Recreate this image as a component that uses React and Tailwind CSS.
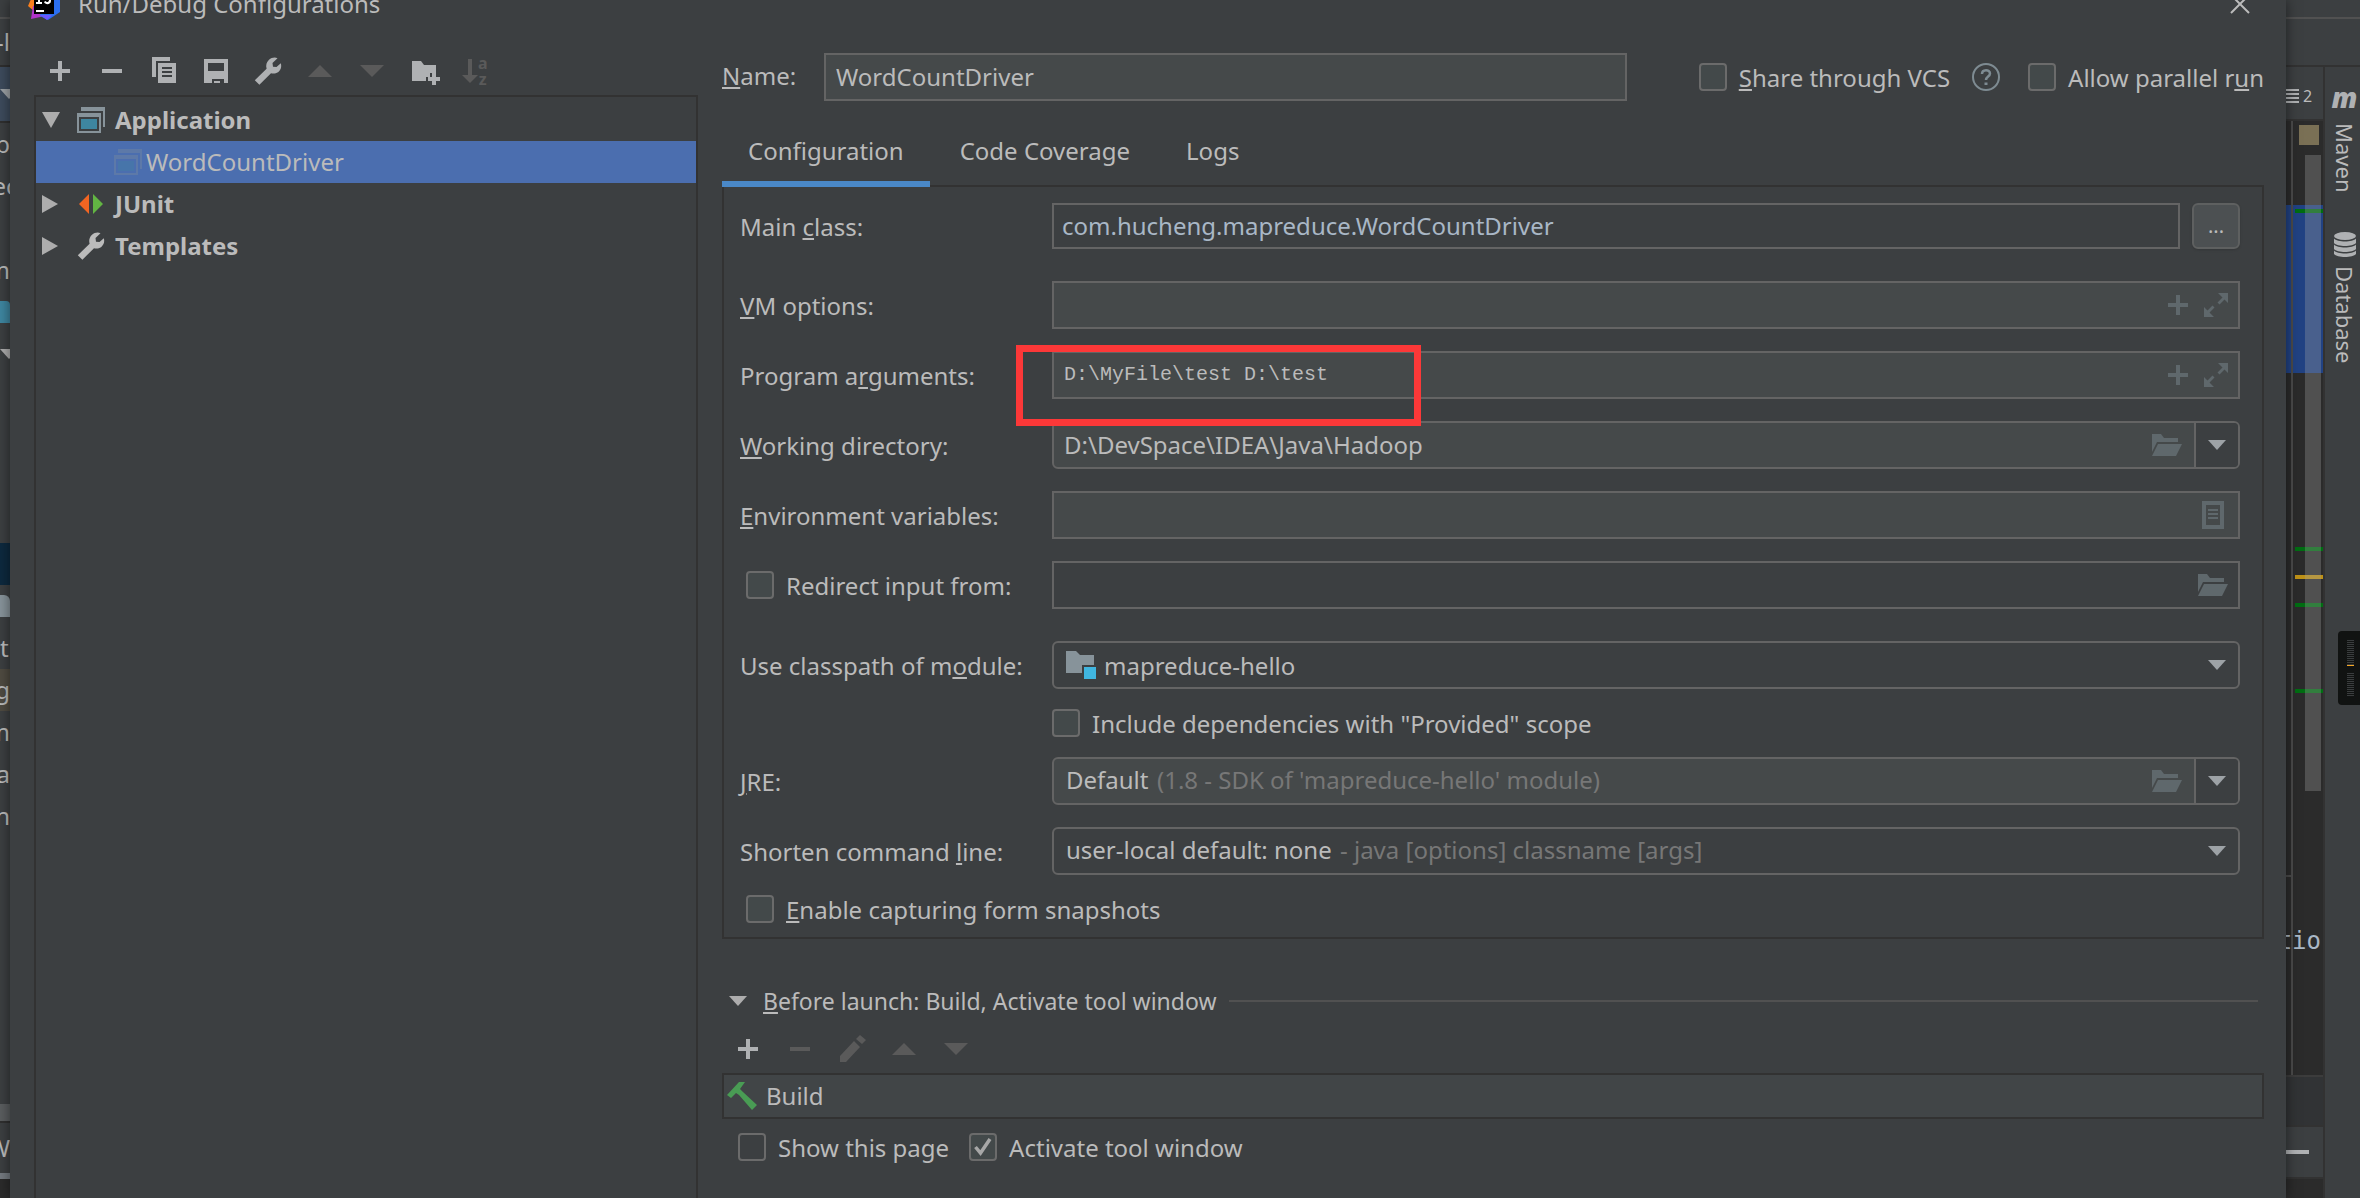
import React from "react";

/* ---------- icons ---------- */

const Svg = ({ w, h, className = "", children }) => (
  <svg width={w} height={h} viewBox={`0 0 ${w} ${h}`} fill="currentColor" className={`shrink-0 ${className}`} aria-hidden="true">
    {children}
  </svg>
);

const PlusIcon = () => (
  <Svg w={32} h={32}>
    <path d="M14 6h4v8h8v4h-8v8h-4v-8H6v-4h8z" />
  </Svg>
);
const MinusIcon = () => (
  <Svg w={32} h={32}>
    <path d="M6 14h20v4H6z" />
  </Svg>
);
const CopyIcon = () => (
  <Svg w={32} h={32}>
    <path d="M4 2h18v4H8v16H4z" />
    <path fillRule="evenodd" d="M10 8h18v20H10zM14 12v2h10v-2zM14 16v2h10v-2zM14 20v2h10v-2z" />
  </Svg>
);
const SaveIcon = () => (
  <Svg w={32} h={32}>
    <path fillRule="evenodd" d="M4 4h24v24h-4v-4H12v4H4zM8 8v8h16V8z" />
    <path d="M14 26h6v2h-6z" />
  </Svg>
);
const WrenchIcon = () => (
  <Svg w={32} h={32}>
    <path d="M25.500 3.200L20.500 8L21 11.800L24.500 12L28.800 8.200C29.900 11.800 28.700 15.300 26 17.200C23.900 18.600 21.300 18.900 19 18.200L7.400 29.700L2.800 25.200L14.600 13.800C13.600 10.300 14.500 7 17 4.700C19.500 2.500 23 2.100 25.500 3.200Z" />
  </Svg>
);
const UpIcon = () => (
  <Svg w={32} h={32}>
    <path d="M4 22L16 10l12 12z" />
  </Svg>
);
const DownIcon = () => (
  <Svg w={32} h={32}>
    <path d="M4 10h24L16 22z" />
  </Svg>
);
const NewFolderIcon = () => (
  <Svg w={32} h={32}>
    <path d="M4 6h9l3 4h12v8h-6v4h-4v4H4z" />
    <path d="M24 18h4v4h4v4h-4v4h-4v-4h-4v-4h4z" />
  </Svg>
);
const SortIcon = () => (
  <span className="flex h-8 items-center">
    <Svg w={18} h={32}>
      <path d="M8 4h4v16h6L10 28l-8-8h6z" />
    </Svg>
    <span className="flex flex-col text-base font-bold leading-4">
      <span>a</span>
      <span>z</span>
    </span>
  </span>
);
const PencilIcon = () => (
  <Svg w={32} h={32}>
    <path d="M4 23L18 8l6 6L10 29H4zM20 6l4-4 6 5-4 4z" />
  </Svg>
);
const ApplicationIcon = ({ className }) => (
  <Svg w={32} h={32} className={className}>
    <path d="M6 3h24v20h-2V7H6z" fill="#87939a" />
    <path fillRule="evenodd" d="M2 9h24v20H2zM4 13v14h20V13z" fill="#87939a" />
    <path d="M6 15h16v10H6z" fill="#3e86a0" />
  </Svg>
);
const JUnitIcon = () => (
  <Svg w={32} h={32}>
    <path d="M14 6v20L4 16z" fill="#f26522" />
    <path d="M18 6v20l10-10z" fill="#62b543" />
  </Svg>
);
const TreeArrow = ({ open }) => (
  <Svg w={20} h={20} className="text-[#adadad]">
    {open ? <path d="M1 2h18l-9 16z" /> : <path d="M1 1l16 9-16 9z" />}
  </Svg>
);
const Caret = ({ className = "text-[#9da2a6]" }) => (
  <Svg w={18} h={10} className={className}>
    <path d="M0 0h18l-9 10z" />
  </Svg>
);
const FolderOpenIcon = () => (
  <Svg w={30} h={22}>
    <path d="M0 0h9l3 4h14v4H5L0 18z" />
    <path d="M6 10h24l-6 12H0z" />
  </Svg>
);
const ExpandIcon = () => (
  <Svg w={24} h={24}>
    <path d="M14 0h10v10l-3.500-3.500-5 5-2-2 5-5zM0 14l3.500 3.500 5-5 2 2-5 5L10 24H0z" />
  </Svg>
);
const FieldPlusIcon = () => (
  <Svg w={20} h={20}>
    <path d="M8 0h4v8h8v4h-8v8H8v-8H0V8h8z" />
  </Svg>
);
const ListDocIcon = () => (
  <Svg w={22} h={28}>
    <path fillRule="evenodd" d="M0 0h22v28H0zM4 4v20h14V4z" />
    <path d="M6 8h10v2H6zM6 12h10v2H6zM6 16h10v2H6z" />
  </Svg>
);
const ModuleIcon = () => (
  <Svg w={30} h={28}>
    <path d="M0 0h10l4 4h14v10H16v8H0z" fill="#87939a" />
    <path d="M18 16h12v12H18z" fill="#40b6e0" />
  </Svg>
);
const HammerIcon = () => (
  <Svg w={32} h={32}>
    <path d="M1 15L13 2h6l-5 7 3 3 14 13-5 5L13 15l-3-2-5 5z" fill="#499c54" />
  </Svg>
);
const HelpIcon = () => (
  <svg width="28" height="28" viewBox="0 0 28 28" fill="none" stroke="#7e8b92" strokeWidth="2" aria-hidden="true">
    <circle cx="14" cy="14" r="13" />
    <path d="M10 11c0-5 8-5 8-0.500 0 3-4 3-4 6.500" strokeWidth="2.500" />
    <path d="M14 19.500v2.500" strokeWidth="3" />
  </svg>
);
const IdeaLogo = () => (
  <svg width="32" height="32" viewBox="0 0 32 32" className="shrink-0" aria-hidden="true">
    <path d="M0 18l6-14 10 14-4 10z" fill="#fc801d" />
    <path d="M5 18l-2 13 14-3-2-14z" fill="#b033c8" />
    <path d="M18 0h14v24l-12 8-8-4z" fill="#2b6ff0" />
    <path d="M12 27h12l-5 5z" fill="#6b57ff" />
    <path d="M6 4h20v22H6z" fill="#000" />
    <path d="M8 7h6v2h-2v5h2v2H8v-2h2V9H8zM16 7h7v6c0 4-6 4-7 1l1.500-1c1 2 3.500 1 3.500-1V9h-5zM8 22h8v2H8z" fill="#fff" />
  </svg>
);
const DatabaseIcon = () => (
  <svg width="24" height="26" viewBox="0 0 24 26" fill="#afb1b3" className="shrink-0" aria-hidden="true">
    <ellipse cx="12" cy="4" rx="11" ry="4" />
    <path d="M1 6.500c3 4 19 4 22 0v4.500c-3 4-19 4-22 0zM1 12.500c3 4 19 4 22 0V17c-3 4-19 4-22 0zM1 18.500c3 4 19 4 22 0V22c-3 4-19 4-22 0z" />
  </svg>
);

/* ---------- small parts ---------- */

const M = ({ children }) => <span className="underline decoration-2 underline-offset-2">{children}</span>;

function Check({ id, checked, plain }) {
  return (
    <span className="relative flex size-7 shrink-0">
      <input
        id={id}
        type="checkbox"
        defaultChecked={checked}
        className={`peer size-7 appearance-none rounded-sm border-2 border-[#6b6b6b] ${plain ? "bg-[#3c3f41]" : "bg-[#43494a]"}`}
      />
      <svg viewBox="0 0 28 28" fill="none" stroke="#a7a7a7" strokeWidth="3.500" className="pointer-events-none absolute inset-0 hidden peer-checked:block" aria-hidden="true">
        <path d="M6.500 14l5 6L21 6" />
      </svg>
    </span>
  );
}

function Tool({ label, off, children }) {
  return (
    <button type="button" aria-label={label} disabled={off} className={`flex size-8 ${off ? "text-[#5a5a5a]" : "text-[#afb1b3]"}`}>
      {children}
    </button>
  );
}

function Field({ label, id, gap = "mt-[22px]", children }) {
  return (
    <div className={`flex items-center ${gap}`}>
      <label htmlFor={id} className="w-[312px] shrink-0 whitespace-nowrap pt-0.5">
        {label}
      </label>
      {children}
    </div>
  );
}

const box = "flex h-12 min-w-0 flex-1 items-center border-2 border-[#646464]";
const inner = "h-full min-w-0 flex-1 bg-transparent outline-none";
const iconBtn = "flex shrink-0 text-[#5f686c]";

function ArrowButton({ label }) {
  return (
    <button type="button" aria-label={label} className="flex h-full w-11 items-center justify-center border-l-2 border-[#646464] bg-[#3c3f41]">
      <Caret />
    </button>
  );
}

/* ---------- backdrop strips ---------- */

const treeRows = [
  "p", "ec", "", "m", "module", "arrow", "", "", "", "", "selected", "folder", "t", "g", "m", "a", "n",
];

function LeftStrip() {
  return (
    <div className="flex w-[10px] shrink-0 flex-col overflow-hidden bg-[#3c3f41]" aria-hidden="true">
      <div className="h-[19px] shrink-0 border-b-2 border-[#515151]" />
      <div className="flex h-12 shrink-0 items-center justify-end whitespace-nowrap border-b-2 border-[#2f2f2f] text-[#bbbbbb]">-l</div>
      <div className="flex h-14 shrink-0 items-center border-b-2 border-[#2f2f2f] bg-[#3d4b5c] text-[#afb1b3]">
        <Caret />
      </div>
      {treeRows.map((row, i) => (
        <div
          key={i}
          className={`flex h-[42px] shrink-0 items-center text-[#bbbbbb] ${
            row === "selected" ? "bg-[#0d293e]" : row === "g" ? "bg-[#4f4b41]" : ""
          } ${row === "t" || row === "arrow" ? "" : row === "ec" ? "justify-center" : "justify-end"}`}
        >
          {row === "module" && <span className="h-[22px] w-full rounded-tr-sm bg-[#3e86a0]" />}
          {row === "folder" && <span className="h-[22px] w-full rounded-tr-md bg-[#87939a]" />}
          {row === "arrow" && <Caret className="text-[#adadad]" />}
          {row.length < 3 && row}
        </div>
      ))}
      <div className="grow" />
      <div className="h-[19px] shrink-0 border-b-2 border-[#2f2f2f] bg-[#5a5d5f]" />
      <div className="flex h-[50px] shrink-0 items-center justify-end text-[#bbbbbb]">W</div>
      <div className="h-[6px] shrink-0 bg-[#747a80]" />
      <div className="h-[19px] shrink-0 bg-[#2b2b2b]" />
    </div>
  );
}

function RightStrip() {
  return (
    <div className="flex w-[74px] shrink-0 flex-col overflow-hidden bg-[#3c3f41]">
      <div className="h-[19px] shrink-0 border-b-2 border-[#515151]" />
      <div className="h-12 shrink-0 border-b-2 border-[#323232]" />
      <div className="flex min-h-0 grow">
        <div className="flex w-[39px] shrink-0 flex-col border-r-2 border-[#323232]">
          <div className="flex h-[54px] shrink-0 items-center gap-1 border-b-2 border-[#323232] pt-1.5 text-base text-[#bbbbbb]">
            <Svg w={13} h={14} className="text-[#afb1b3]">
              <path d="M0 0h13v2H0zM0 4h13v2H0zM0 8h13v2H0zM0 12h13v2H0z" />
            </Svg>
            2
          </div>
          <div className="relative grow overflow-hidden bg-[#2b2b2b]">
            <div className="absolute inset-x-0 top-[84px] h-[168px] bg-[#214283]" />
            <div className="absolute inset-y-0 left-[5px] w-[2px] bg-[#4b4b4b]" />
            <div className="absolute left-[13px] top-1 size-5 bg-[#7a7055]" />
            <div className="absolute left-[9px] right-0 top-[88px] h-1 bg-[#006d12]" />
            <div className="absolute left-[9px] right-0 top-[426px] h-1 bg-[#006d12]" />
            <div className="absolute left-[9px] right-0 top-[454px] h-1 bg-[#be9117]" />
            <div className="absolute left-[9px] right-0 top-[482px] h-1 bg-[#006d12]" />
            <div className="absolute left-[9px] right-0 top-[568px] h-1 bg-[#006d12]" />
            <div className="absolute left-[19px] top-[34px] h-[636px] w-4 bg-[#a6a6a6]/30" />
            <div className="absolute left-0 top-[754px] h-[2px] w-[5px] bg-[#4b4b4b]" />
            <div className="absolute right-0.5 top-[804px] font-['DejaVu_Sans_Mono',monospace] text-2xl text-[#a9b7c6]">tio</div>
          </div>
          <div className="h-[50px] shrink-0 border-t-2 border-[#3c3c3c] bg-[#313335]" />
          <div className="flex h-[52px] shrink-0 items-center border-t-2 border-[#323232]">
            <div className="h-1 w-[23px] bg-[#afb1b3]" />
          </div>
          <div className="h-[21px] shrink-0 border-t-2 border-[#323232] bg-[#2b2b2b]" />
        </div>
        <div className="relative flex grow flex-col items-center pl-1 text-[22px] text-[#bbbbbb]">
          <span className="mt-3.5 font-['Open_Sans',sans-serif] text-[28px] font-extrabold italic leading-8 text-[#afb1b3]">m</span>
          <button type="button" className="mt-2.5 leading-6 [writing-mode:vertical-rl]">Maven</button>
          <button type="button" className="mt-10 flex flex-col items-center gap-2">
            <DatabaseIcon />
            <span className="leading-6 [writing-mode:vertical-rl]">Database</span>
          </button>
          <div className="absolute right-0 top-[564px] flex h-[74px] w-[22px] flex-col gap-[7px] rounded-l-sm bg-[#111312] pl-[9px] pt-[9px]">
            <div className="h-[26px] w-[7px] border-b border-[#f5a623] bg-[repeating-linear-gradient(#3a3d3e_0_1px,transparent_1px_2px)]" />
            <div className="h-6 w-[7px] bg-[repeating-linear-gradient(#3a3d3e_0_1px,transparent_1px_2px)]" />
          </div>
        </div>
      </div>
    </div>
  );
}

/* ---------- dialog ---------- */

function Sidebar() {
  const row = "flex h-[42px] items-center";
  const group = `${row} gap-3.5 pl-[5px] font-bold`;
  return (
    <aside className="ml-6 flex w-[664px] shrink-0 flex-col">
      <div className="flex h-[67px] items-center gap-5 pb-[5px] pl-2.5 pt-6">
        <Tool label="Add"><PlusIcon /></Tool>
        <Tool label="Remove"><MinusIcon /></Tool>
        <Tool label="Copy"><CopyIcon /></Tool>
        <Tool label="Save"><SaveIcon /></Tool>
        <Tool label="Edit templates"><WrenchIcon /></Tool>
        <Tool label="Move up" off><UpIcon /></Tool>
        <Tool label="Move down" off><DownIcon /></Tool>
        <Tool label="New folder"><NewFolderIcon /></Tool>
        <Tool label="Sort" off><SortIcon /></Tool>
      </div>
      <ul className="grow border-2 border-b-0 border-[#323232] pt-[2px]">
        <li className={group}>
          <TreeArrow open />
          <span className="flex items-center gap-2"><ApplicationIcon />Application</span>
        </li>
        <li className={`${row} gap-0.5 bg-[#4b6eaf] pl-[76px]`}>
          <ApplicationIcon className="opacity-30" />
          WordCountDriver
        </li>
        <li className={group}>
          <TreeArrow />
          <span className="flex items-center gap-2"><JUnitIcon />JUnit</span>
        </li>
        <li className={group}>
          <TreeArrow />
          <span className="flex items-center gap-2"><WrenchIcon />Templates</span>
        </li>
      </ul>
    </aside>
  );
}

function ConfigurationForm() {
  return (
    <div className="flex flex-col border-2 border-[#323232] pb-3.5 pl-4 pr-[22px] pt-4">
      <Field id="main" gap="" label={<>Main <M>c</M>lass:</>}>
        <div className="flex h-[46px] min-w-0 flex-1 gap-3">
          <input id="main" defaultValue="com.hucheng.mapreduce.WordCountDriver" className="min-w-0 flex-1 border-2 border-[#646464] bg-transparent px-2 text-[#a9b7c6] outline-none" />
          <button type="button" className="w-12 rounded-md border-2 border-[#5e6060] bg-[#4c5052] text-xl shadow-sm">...</button>
        </div>
      </Field>

      <Field id="vm" gap="mt-8" label={<><M>V</M>M options:</>}>
        <div className={`${box} bg-[#45494a] gap-4 pl-2 pr-2.5`}>
          <input id="vm" className={inner} />
          <button type="button" aria-label="Insert macro" className={iconBtn}><FieldPlusIcon /></button>
          <button type="button" aria-label="Expand" className={iconBtn}><ExpandIcon /></button>
        </div>
      </Field>

      <div className="relative">
        <Field id="args" label={<>Program a<M>r</M>guments:</>}>
          <div className={`${box} bg-[#45494a] gap-4 pl-2.5 pr-2.5`}>
            <input id="args" defaultValue="D:\MyFile\test D:\test" className={`${inner} pb-0.5 font-['Liberation_Mono',monospace] text-xl`} />
            <button type="button" aria-label="Insert macro" className={iconBtn}><FieldPlusIcon /></button>
            <button type="button" aria-label="Expand" className={iconBtn}><ExpandIcon /></button>
          </div>
        </Field>
        <div className="pointer-events-none absolute left-[276px] top-4 z-10 h-[81px] w-[405px] border-[7px] border-[#fc3838]" />
      </div>

      <Field id="dir" label={<><M>W</M>orking directory:</>}>
        <div className={`${box} rounded-md bg-[#45494a] overflow-hidden pl-2.5`}>
          <input id="dir" defaultValue="D:\DevSpace\IDEA\Java\Hadoop" className={`${inner} pb-0.5`} />
          <button type="button" aria-label="Browse" className={`${iconBtn} mr-3`}><FolderOpenIcon /></button>
          <ArrowButton label="Recent directories" />
        </div>
      </Field>

      <Field id="env" label={<><M>E</M>nvironment variables:</>}>
        <div className={`${box} bg-[#45494a] pl-2 pr-3.5`}>
          <input id="env" className={inner} />
          <button type="button" aria-label="Edit variables" className={iconBtn}><ListDocIcon /></button>
        </div>
      </Field>

      <div className="mt-[22px] flex items-center">
        <div className="flex w-[312px] shrink-0 items-center gap-3 pl-1.5">
          <Check id="redirect" />
          <label htmlFor="redirect" className="whitespace-nowrap pt-0.5">Redirect input from:</label>
        </div>
        <div className={`${box} pl-2 pr-2.5`}>
          <input aria-label="Redirect input from" className={inner} />
          <button type="button" aria-label="Browse" className={iconBtn}><FolderOpenIcon /></button>
        </div>
      </div>

      <Field id="module" gap="mt-8" label={<>Use classpath of m<M>o</M>dule:</>}>
        <div className={`${box} gap-2 rounded-md pl-3 pr-3`}>
          <ModuleIcon />
          <select id="module" className={`${inner} appearance-none pt-0.5`}>
            <option>mapreduce-hello</option>
          </select>
          <Caret />
        </div>
      </Field>

      <div className="ml-[312px] mt-5 flex h-7 items-center gap-3">
        <Check id="provided" />
        <label htmlFor="provided" className="pt-0.5">Include dependencies with "Provided" scope</label>
      </div>

      <Field id="jre" gap="mt-5" label={<><M>J</M>RE:</>}>
        <div className={`${box} overflow-hidden rounded-md bg-[#45494a] pl-3`}>
          <select id="jre" className="appearance-none bg-transparent pb-0.5 outline-none">
            <option>Default</option>
          </select>
          <span className="ml-2 grow whitespace-nowrap pb-0.5 text-[#777777]">(1.8 - SDK of 'mapreduce-hello' module)</span>
          <button type="button" aria-label="Browse" className={`${iconBtn} mr-3`}><FolderOpenIcon /></button>
          <ArrowButton label="Choose JRE" />
        </div>
      </Field>

      <Field id="shorten" label={<>Shorten command <M>l</M>ine:</>}>
        <div className={`${box} rounded-md pl-3 pr-3`}>
          <select id="shorten" className="appearance-none bg-transparent pb-0.5 outline-none">
            <option>user-local default: none</option>
          </select>
          <span className="ml-2 grow whitespace-nowrap pb-0.5 text-[#777777]">- java [options] classname [args]</span>
          <Caret />
        </div>
      </Field>

      <div className="mt-5 flex h-7 items-center gap-3 pl-1.5">
        <Check id="snapshots" />
        <label htmlFor="snapshots" className="pt-0.5"><M>E</M>nable capturing form snapshots</label>
      </div>
    </div>
  );
}

function BeforeLaunch() {
  return (
    <section className="mt-11">
      <div className="flex h-9 items-center pl-[7px] pr-1.5">
        <Caret className="text-[#adadad]" />
        <h2 className="ml-4 whitespace-nowrap text-[23px]"><M>B</M>efore launch: Build, Activate tool window</h2>
        <div className="ml-3 h-[2px] grow bg-[#515151]" />
      </div>
      <div className="mt-3.5 flex gap-5 pl-2.5">
        <Tool label="Add task"><PlusIcon /></Tool>
        <Tool label="Remove task" off><MinusIcon /></Tool>
        <Tool label="Edit task" off><PencilIcon /></Tool>
        <Tool label="Move task up" off><UpIcon /></Tool>
        <Tool label="Move task down" off><DownIcon /></Tool>
      </div>
      <ul className="mt-2 border-2 border-[#323232]">
        <li className="flex h-[42px] items-center gap-2 bg-[#414547] pl-0.5"><HammerIcon />Build</li>
      </ul>
      <div className="mt-3.5 flex h-7 items-center gap-3 pl-4">
        <Check id="show" plain />
        <label htmlFor="show" className="pt-0.5">Show this page</label>
        <span className="ml-2"><Check id="activate" checked /></span>
        <label htmlFor="activate" className="pt-0.5">Activate tool window</label>
      </div>
    </section>
  );
}

function Dialog() {
  return (
    <main className="relative z-10 flex min-w-0 grow flex-col bg-[#3c3f41] shadow-[0_0_12px_rgba(0,0,0,0.5)]">
      <header className="flex h-7 shrink-0 items-end justify-between overflow-hidden pb-2 pl-[18px] pr-9">
        <div className="flex items-end gap-[18px]">
          <IdeaLogo />
          <h1 className="leading-8">Run/Debug Configurations</h1>
        </div>
        <button type="button" aria-label="Close" className="flex pb-1.5">
          <svg width="20" height="20" viewBox="0 0 20 20" stroke="#bbbbbb" strokeWidth="2" aria-hidden="true">
            <path d="M1 1l18 18M19 1L1 19" />
          </svg>
        </button>
      </header>
      <div className="flex min-h-0 grow">
        <Sidebar />
        <div className="ml-6 mr-[22px] flex min-w-0 grow flex-col pt-[25px]">
          <div className="flex h-12 items-center">
            <label htmlFor="name" className="w-[102px] shrink-0 pb-0.5"><M>N</M>ame:</label>
            <input id="name" defaultValue="WordCountDriver" className="h-12 min-w-0 flex-1 border-2 border-[#646464] bg-[#45494a] px-2.5 pb-0.5 outline-none" />
            <div className="ml-[72px] flex items-center gap-3 whitespace-nowrap">
              <Check id="vcs" />
              <label htmlFor="vcs" className="pt-0.5"><M>S</M>hare through VCS</label>
              <button type="button" aria-label="Help" className="ml-2.5"><HelpIcon /></button>
              <span className="ml-4"><Check id="parallel" /></span>
              <label htmlFor="parallel" className="pt-0.5">Allow parallel r<M>u</M>n</label>
            </div>
          </div>
          <div role="tablist" className="relative -mb-[2px] mt-5 flex h-[66px] gap-1">
            <button type="button" role="tab" aria-selected="true" className="border-b-6 border-[#4a88c7] px-[26px]">Configuration</button>
            <button type="button" role="tab" aria-selected="false" className="border-b-6 border-transparent px-[26px]">Code Coverage</button>
            <button type="button" role="tab" aria-selected="false" className="border-b-6 border-transparent px-[26px]">Logs</button>
          </div>
          <ConfigurationForm />
          <BeforeLaunch />
        </div>
      </div>
    </main>
  );
}

export default function App() {
  return (
    <div className="flex h-screen min-h-[1198px] overflow-hidden bg-[#3c3f41] font-['Noto_Sans',sans-serif] text-2xl text-[#bbbbbb]">
      <LeftStrip />
      <Dialog />
      <RightStrip />
    </div>
  );
}
